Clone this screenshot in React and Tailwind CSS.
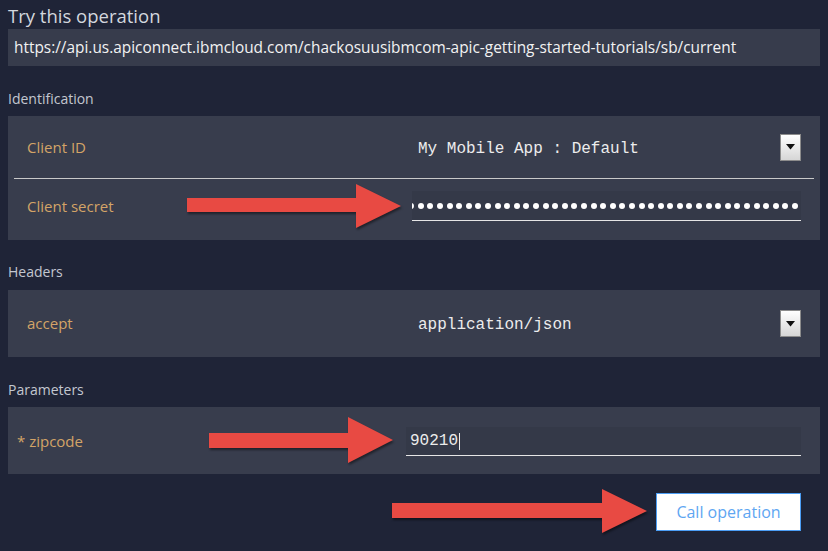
import React from 'react';

const ui = { fontFamily: '"Open Sans", "Noto Sans", sans-serif' };
const mono = { fontFamily: '"Liberation Mono", "Courier New", monospace' };

// red callout arrow drawn over the form
function Arrow({ className, w, h, st, sb, hx }) {
    const pts = `0,${st} ${hx},${st} ${hx},0 ${w},${h / 2} ${hx},${h} ${hx},${sb} 0,${sb}`;
    return (
        <svg className={`absolute drop-shadow-[1px_2px_1px_rgba(0,0,0,0.45)] ${className}`} width={w} height={h} viewBox={`0 0 ${w} ${h}`}>
            <polygon points={pts} fill="#e84a43" />
        </svg>
    );
}

function DropButton() {
    return (
        <div className="flex h-[27px] w-[21px] shrink-0 items-center justify-center border border-[#8c8c8c] bg-gradient-to-b from-white to-[#d6d6d6]">
            <svg width="9" height="6" viewBox="0 0 9 6"><polygon points="0,0 9,0 4.5,5.5" fill="#111" /></svg>
        </div>
    );
}

function SectionLabel({ children, className }) {
    return <p className={`text-[14px] leading-4 text-[#c3c7d0] ${className}`}>{children}</p>;
}

export default function App() {
    const dots = Array.from({ length: 42 });

    return (
        <div className="relative h-[551px] w-[828px] overflow-hidden bg-[#1f2437] px-2" style={ui}>
            <h1 className="h-[29px] pt-[3px] text-[18.5px] leading-[25px] text-[#d3d7de]">Try this operation</h1>

            <div className="flex h-[37px] items-center bg-[#373c4c] pl-[6px] text-[15.4px] text-[#f2f2f2]">
                https://api.us.apiconnect.ibmcloud.com/chackosuusibmcom-apic-getting-started-tutorials/sb/current
            </div>

            <SectionLabel className="pt-[25px] pb-[9px]">Identification</SectionLabel>

            <div className="bg-[#383d4d]">
                <div className="flex h-[62px] items-center">
                    <span className="w-[404px] shrink-0 pl-[19px] text-[15px] text-[#d3a467]">Client ID</span>
                    <div className="flex min-w-0 flex-1 items-center justify-between pr-[19px]">
                        <span className="pl-[6px] pt-[3px] text-[16px] text-[#ececec]" style={mono}>My Mobile App : Default</span>
                        <DropButton />
                    </div>
                </div>
                <div className="mx-[6px] h-px bg-[#c9c9c9]" />
                <div className="flex items-center pt-[12px] pb-[19px]">
                    <span className="w-[404px] shrink-0 pl-[19px] text-[15px] text-[#d3a467]">Client secret</span>
                    <div className="min-w-0 flex-1 pr-[19px]">
                        <div className="flex h-[30px] items-center justify-end overflow-hidden border-b border-[#e6e6e6] bg-[#343948] pr-[3px]">
                            {dots.map((_, i) => (
                                <span key={i} className="ml-[3.6px] h-[6px] w-[6px] shrink-0 rounded-full bg-white" />
                            ))}
                        </div>
                    </div>
                </div>
            </div>

            <SectionLabel className="pt-[24px] pb-[10px]">Headers</SectionLabel>

            <div className="flex h-[67px] items-center bg-[#383d4d]">
                <span className="w-[404px] shrink-0 pl-[19px] text-[15px] text-[#d3a467]">accept</span>
                <div className="flex min-w-0 flex-1 items-center justify-between pr-[19px]">
                    <span className="pl-[6px] pt-[2px] text-[16px] text-[#ececec]" style={mono}>application/json</span>
                    <DropButton />
                </div>
            </div>

            <SectionLabel className="pt-[25px] pb-[9px]">Parameters</SectionLabel>

            <div className="flex items-center bg-[#383d4d] pt-[20px] pb-[18px]">
                <span className="w-[398px] shrink-0 pl-[9px] text-[15px] text-[#d3a467]">* zipcode</span>
                <div className="min-w-0 flex-1 pr-[19px]">
                    <div className="flex h-[29px] items-center border-b border-[#e6e6e6] bg-[#343948] pl-[4px]">
                        <span className="text-[16px] text-[#ececec]" style={mono}>90210</span>
                        <span className="ml-px h-[17px] w-px bg-[#ececec]" />
                    </div>
                </div>
            </div>

            <div className="mt-[19px] flex justify-end pr-[19px]">
                <button className="h-[38px] w-[145px] border border-[#4c9ef5] bg-white text-[16px] text-[#5ea6f2]">Call operation</button>
            </div>

            <Arrow className="left-[187px] top-[184px]" w={214} h={44} st={14} sb={28} hx={169} />
            <Arrow className="left-[209px] top-[417px]" w={184} h={46} st={16} sb={31} hx={139} />
            <Arrow className="left-[392px] top-[489px]" w={255} h={44} st={14} sb={29} hx={210} />
        </div>
    );
}
